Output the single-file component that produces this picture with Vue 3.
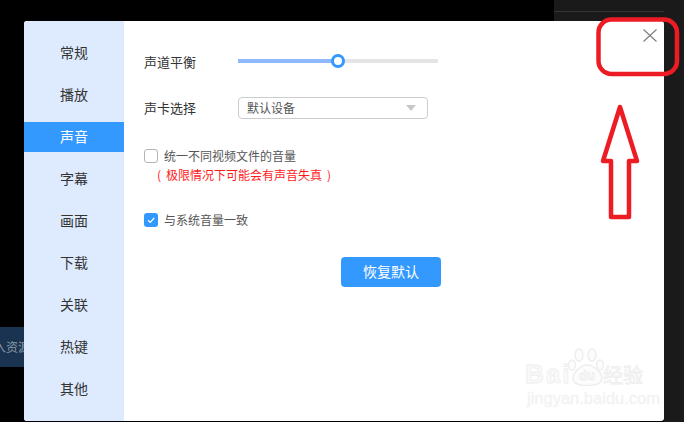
<script setup>
const navItems = ['常规', '播放', '声音', '字幕', '画面', '下载', '关联', '热键', '其他']
const activeItem = '声音'
</script>

<template>
  <div class="screen">
    <div class="bg-top-right"></div>
    <div class="bg-right"></div>
    <div class="bg-banner"><span>入资源</span></div>

    <section class="dialog">
      <nav class="sidebar">
        <div v-for="item in navItems" :key="item" class="nav-item" :class="{ active: item === activeItem }">{{ item }}</div>
      </nav>
      <main class="content">
        <div class="row">
          <span class="row-label">声道平衡</span>
          <div class="slider">
            <div class="slider-fill"></div>
            <div class="slider-knob"></div>
          </div>
        </div>
        <div class="row row-select">
          <span class="row-label">声卡选择</span>
          <div class="select">
            <span class="lift">默认设备</span>
            <i class="caret"></i>
          </div>
        </div>
        <label class="check first-check">
          <span class="box"></span>
          <span class="lift">统一不同视频文件的音量</span>
        </label>
        <div class="warning"><span>(</span><span>极限情况下可能会有声音失真</span><span>)</span></div>
        <label class="check second-check">
          <span class="box checked">
            <svg viewBox="0 0 14 14" width="14" height="14"><path d="M4 7.3 6.2 9.4 10.2 5" fill="none" stroke="#fff" stroke-width="1.2" /></svg>
          </span>
          <span class="lift">与系统音量一致</span>
        </label>
        <button class="reset">恢复默认</button>
      </main>
      <svg class="close" viewBox="0 0 14 13" width="14" height="13"><path d="M.5.5 13.5 12.5M13.5.5.5 12.5" stroke="#7d7d7d" stroke-width="1.1" fill="none" /></svg>
      <div class="watermark">
        <svg class="paw" viewBox="0 0 40 42" width="40" height="42">
          <g fill="#fcfcfc" stroke="#eeeeee" stroke-width="1.5">
            <ellipse cx="6" cy="19" rx="3.5" ry="5" />
            <ellipse cx="13" cy="9" rx="4" ry="6" />
            <ellipse cx="26" cy="9" rx="4" ry="6" />
            <ellipse cx="34" cy="19" rx="3.5" ry="5" />
            <path d="M7 32c0-5 7-13 14-13s15 8 15 13-5 7.500-15 7.500S7 37 7 32Z" />
          </g>
        </svg>
        <span class="wm-bai">Bai</span>
        <span class="wm-du">du</span>
        <span class="wm-cn">经验</span>
        <span class="wm-url">jingyan.baidu.com</span>
      </div>
    </section>

    <svg class="annotation" viewBox="0 0 684 422" width="684" height="422">
      <g fill="none" stroke="#ed1c24" stroke-width="4.5">
        <rect x="598.5" y="19.500" width="78.500" height="54.500" rx="13" />
        <path d="M620 107 603 161H611V217H629V161H637Z" stroke-linejoin="round" />
      </g>
    </svg>
  </div>
</template>

<style>
html, body { margin: 0; background: #000; }
</style>

<style scoped>
.screen {
  position: relative;
  width: 684px;
  height: 422px;
  overflow: hidden;
  background: #000;
  box-sizing: border-box;
  padding: 21px 20px 1px 24px;
  font-family: "Noto Sans CJK SC", "Liberation Sans", sans-serif;
}
.bg-top-right {
  position: absolute;
  left: 554px;
  top: 0;
  right: 0;
  height: 21px;
  background: #1a1a1a;
}
.bg-top-right::after {
  content: "";
  position: absolute;
  left: 0;
  right: 0;
  top: 11px;
  height: 1px;
  background: #333;
}
.bg-right {
  position: absolute;
  left: 664px;
  top: 0;
  right: 0;
  bottom: 0;
  background: #1a1a1a;
}
.bg-banner {
  position: absolute;
  left: 0;
  top: 327px;
  width: 24px;
  height: 40px;
  overflow: hidden;
  background: #1a3350;
  color: #8b98a6;
  font-size: 12px;
  line-height: 40px;
  white-space: nowrap;
}
.bg-banner span {
  display: block;
  margin-left: -6px;
}
.dialog {
  position: relative;
  display: flex;
  width: 640px;
  height: 400px;
  border-radius: 3px;
  overflow: hidden;
  background: #fff;
}
.sidebar {
  width: 100px;
  flex: none;
  box-sizing: border-box;
  padding-top: 17px;
  background: #deebff;
}
.nav-item {
  height: 30px;
  margin-bottom: 12px;
  line-height: 28px;
  text-align: center;
  font-size: 14px;
  color: #333;
}
.nav-item.active {
  background: #3399ff;
  color: #fff;
}
.content {
  flex: 1;
  box-sizing: border-box;
  padding: 29px 0 0 20px;
  color: #555;
  font-size: 12px;
}
.row {
  display: flex;
  align-items: center;
  height: 22px;
}
.row-select {
  margin-top: 25px;
}
.row-select .row-label {
  padding-bottom: 2px;
}
.row-label {
  width: 94px;
  flex: none;
  font-size: 13px;
  color: #333;
}
.lift {
  padding-bottom: 2px;
}
.slider {
  position: relative;
  width: 200px;
  height: 4px;
  background: #e5e5e5;
}
.slider-fill {
  width: 100px;
  height: 100%;
  background: #8fb8ff;
}
.slider-knob {
  position: absolute;
  left: 93px;
  top: -5px;
  width: 14px;
  height: 14px;
  box-sizing: border-box;
  border: 3px solid #3399ff;
  border-radius: 50%;
  background: #fff;
}
.select {
  display: flex;
  align-items: center;
  justify-content: space-between;
  box-sizing: border-box;
  width: 190px;
  height: 22px;
  padding: 0 11px 0 8px;
  border: 1px solid #ccc;
  border-radius: 4px;
  color: #555;
}
.caret {
  width: 0;
  height: 0;
  border-left: 5px solid transparent;
  border-right: 5px solid transparent;
  border-top: 6px solid #c8c8c8;
}
.check {
  display: flex;
  align-items: center;
  gap: 6px;
  height: 14px;
}
.first-check {
  margin-top: 30px;
}
.second-check {
  margin-top: 29px;
}
.box {
  width: 14px;
  height: 14px;
  flex: none;
  box-sizing: border-box;
  border: 1px solid #b5b5b5;
  border-radius: 3px;
  background: #fff;
}
.box.checked {
  border: none;
  background: #3399ff;
}
.box svg {
  display: block;
}
.warning {
  display: flex;
  gap: 5px;
  height: 18px;
  margin-top: 3px;
  margin-left: 13px;
  line-height: 18px;
  color: #ff1a1a;
}
.reset {
  display: block;
  width: 100px;
  height: 30px;
  margin: 30px 0 0 197px;
  padding: 0 0 2px;
  border: none;
  border-radius: 4px;
  background: #3399ff;
  color: #fff;
  font-family: inherit;
  font-size: 14px;
}
.close {
  position: absolute;
  left: 619px;
  top: 8px;
}
.watermark {
  position: absolute;
  left: 498px;
  top: 325px;
  width: 125px;
  height: 70px;
  color: #fafafa;
  font-family: "Liberation Sans", sans-serif;
}
.paw {
  position: absolute;
  left: 44px;
  top: 0;
}
.wm-bai, .wm-du, .wm-cn, .wm-url {
  position: absolute;
  white-space: nowrap;
  -webkit-text-stroke: 0.8px #eeeeee;
}
.wm-bai {
  left: 3px;
  top: 15px;
  font-size: 26px;
  font-weight: 700;
  letter-spacing: 2px;
  line-height: 26px;
}
.wm-du {
  left: 57px;
  top: 22px;
  font-size: 13px;
  font-weight: 700;
  line-height: 16px;
}
.wm-cn {
  left: 81px;
  top: 17px;
  font-family: "Noto Sans CJK SC", sans-serif;
  font-size: 20px;
  line-height: 24px;
}
.wm-url {
  left: 5px;
  top: 43px;
  font-size: 16.5px;
  line-height: 18px;
  -webkit-text-stroke: 0.3px #f2f2f2;
  color: #f3f3f3;
}
.annotation {
  position: absolute;
  left: 0;
  top: 0;
  pointer-events: none;
}
</style>
